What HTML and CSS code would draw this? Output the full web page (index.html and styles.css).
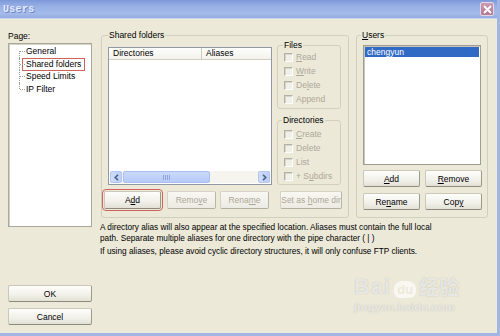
FILE: index.html
```html
<!DOCTYPE html>
<html lang="en">
<head>
    <meta charset="UTF-8">
    <title>Users</title>
    <link rel="stylesheet" href="styles.css">
</head>
<body>
    <div class="window">
        <div class="titlebar">
            <span class="title">Users</span>
            <span class="close">
                <svg width="9" height="9" viewBox="0 0 9 9"><path d="M1.5 1.5L7.5 7.5M7.5 1.5L1.5 7.5" stroke="#fff" stroke-width="1.8" stroke-linecap="round"/></svg>
            </span>
        </div>

        <div class="content">
            <!-- page list + dialog buttons -->
            <div class="side">
                <div class="caption">Page:</div>
                <ul class="tree">
                    <li>General</li>
                    <li><span class="marked">Shared folders</span></li>
                    <li>Speed Limits</li>
                    <li>IP Filter</li>
                </ul>
                <div class="dialog-buttons">
                    <button class="btn">OK</button>
                    <button class="btn">Cancel</button>
                </div>
            </div>

            <div class="main">
                <div class="groups">
                    <fieldset class="group shared">
                        <legend>Shared folders</legend>
                        <div class="shared-row">
                            <div class="listview">
                                <div class="lv-head">
                                    <span class="col-dir">Directories</span>
                                    <span class="col-alias">Aliases</span>
                                </div>
                                <div class="lv-body"></div>
                                <div class="hscroll">
                                    <span class="sb-arrow">
                                        <svg width="5" height="7" viewBox="0 0 5 7"><path d="M4 0.8L1.2 3.5L4 6.2" fill="none" stroke="#4d6185" stroke-width="1.6"/></svg>
                                    </span>
                                    <span class="sb-track">
                                        <span class="sb-thumb"><span class="grip"></span></span>
                                    </span>
                                    <span class="sb-arrow">
                                        <svg width="5" height="7" viewBox="0 0 5 7"><path d="M1 0.8L3.8 3.5L1 6.2" fill="none" stroke="#4d6185" stroke-width="1.6"/></svg>
                                    </span>
                                </div>
                            </div>

                            <div class="perms">
                                <fieldset class="group sub files">
                                    <legend>Files</legend>
                                    <label class="check"><span class="box"></span><span><u>R</u>ead</span></label>
                                    <label class="check"><span class="box"></span><span><u>W</u>rite</span></label>
                                    <label class="check"><span class="box"></span><span>De<u>l</u>ete</span></label>
                                    <label class="check"><span class="box"></span><span>Append</span></label>
                                </fieldset>
                                <fieldset class="group sub dirs">
                                    <legend>Directories</legend>
                                    <label class="check"><span class="box"></span><span><u>C</u>reate</span></label>
                                    <label class="check"><span class="box"></span><span>Delete</span></label>
                                    <label class="check"><span class="box"></span><span>List</span></label>
                                    <label class="check"><span class="box"></span><span>+ S<u>u</u>bdirs</span></label>
                                </fieldset>
                            </div>
                        </div>

                        <div class="shared-buttons">
                            <button class="btn add marked-btn">A<u>d</u>d</button>
                            <button class="btn remove" disabled>Remo<u>v</u>e</button>
                            <button class="btn rename" disabled>Rena<u>m</u>e</button>
                            <button class="btn home" disabled>Set as <u>h</u>ome dir</button>
                        </div>
                    </fieldset>

                    <fieldset class="group users">
                        <legend><u>U</u>sers</legend>
                        <div class="userlist">
                            <div class="user selected">chengyun</div>
                        </div>
                        <div class="user-buttons">
                            <button class="btn"><u>A</u>dd</button>
                            <button class="btn"><u>R</u>emove</button>
                            <button class="btn">Re<u>n</u>ame</button>
                            <button class="btn">Cop<u>y</u></button>
                        </div>
                    </fieldset>
                </div>

                <p class="note">A directory alias will also appear at the specified location. Aliases must contain the full local path. Separate multiple aliases for one directory with the pipe character ( | )</p>
                <p class="note second">If using aliases, please avoid cyclic directory structures, it will only confuse FTP clients.</p>
            </div>
        </div>

        <div class="watermark">
            <div class="wm-logo">
                <span class="wm-bai">Bai</span>
                <span class="wm-du">du</span>
                <span class="wm-cn">经验</span>
            </div>
            <div class="wm-url">jingyan.baidu.com</div>
        </div>
    </div>
</body>
</html>
```

FILE: styles.css
```css
* {
    margin: 0;
    padding: 0;
    box-sizing: border-box;
}

body {
    font-family: "Liberation Sans", Arial, sans-serif;
    font-size: 8.5px;
    color: #000;
    background-color: #ece9d8;
}

.window {
    position: relative;
    width: 500px;
    height: 336px;
    display: flex;
    flex-direction: column;
    background-color: #ece9d8;
    border-right: 3px solid #a2b5e3;
    border-bottom: 3px solid #a2b5e3;
}

/* title bar */
.titlebar {
    height: 19px;
    display: flex;
    align-items: center;
    justify-content: space-between;
    padding: 0 3px 0 3px;
    background: linear-gradient(#7d99d8 0, #98b0e5 35%, #a4bae9 75%, #93abe2 100%);
    border-bottom: 1px solid #c9d4ee;
}

.title {
    font-family: "Liberation Mono", monospace;
    font-weight: bold;
    font-size: 10px;
    letter-spacing: 0.3px;
    color: #e2eafb;
    text-shadow: 1px 1px 0 #6b86c8;
}

.close {
    width: 14px;
    height: 14px;
    display: flex;
    align-items: center;
    justify-content: center;
    background: linear-gradient(#cc9bb3, #b07894);
    border: 1px solid #e6d6e3;
    border-radius: 2px;
}

/* body */
.content {
    flex: 1;
    display: flex;
    gap: 9px;
    padding: 11px 6px 8px 8px;
}

.side {
    width: 84px;
    display: flex;
    flex-direction: column;
}

.caption {
    margin-top: 1px;
    line-height: 11px;
}

.tree {
    list-style: none;
    margin-top: 1px;
    height: 184px;
    padding: 1px 0 0 10px;
    background-color: #fff;
    border: 1px solid #a9a89b;
    box-shadow: inset 1px 1px 0 #d5d3c6;
}

.tree li {
    position: relative;
    height: 12.5px;
    line-height: 12.5px;
    padding-left: 7px;
}

.tree li::before {
    content: "";
    position: absolute;
    left: 0;
    top: 0;
    height: 100%;
    border-left: 1px dotted #9b9b9b;
}

.tree li:first-child::before {
    top: 50%;
    height: 50%;
}

.tree li:last-child::before {
    height: 50%;
}

.tree li::after {
    content: "";
    position: absolute;
    left: 1px;
    top: 50%;
    width: 5px;
    border-top: 1px dotted #9b9b9b;
}

.marked {
    display: inline-block;
    margin-left: -3px;
    padding: 0 3px 0 3px;
    line-height: 11px;
    outline: 1px solid #d0615d;
    outline-offset: 0;
}

.dialog-buttons {
    margin-top: auto;
    display: flex;
    flex-direction: column;
    gap: 6px;
}

.dialog-buttons .btn {
    height: 17px;
}

/* buttons */
.btn {
    font-family: inherit;
    font-size: 8.5px;
    color: #000;
    height: 18px;
    background: linear-gradient(#fdfdfb, #f1f0ea 60%, #e3e1d5);
    border: 1px solid #cbc8ba;
    border-right-color: #9d9a8c;
    border-bottom-color: #8e8b7e;
    border-radius: 2px;
}

.btn:disabled {
    color: #aca899;
    background: linear-gradient(#f8f7f2, #ecebe3);
    border-color: #d6d3c6 #b9b6a8 #b3b0a2 #d6d3c6;
}

.marked-btn {
    outline: 1px solid #d0615d;
    outline-offset: 1px;
}

/* group boxes */
.group {
    border: 1px solid #d0d0bf;
    border-radius: 3px;
    min-width: 0;
}

.group legend {
    margin-left: 5px;
    padding: 0 1px;
    line-height: 10px;
}

.main {
    flex: 1;
    display: flex;
    flex-direction: column;
}

.groups {
    display: flex;
    gap: 7px;
}

.shared {
    width: 248px;
    padding: 0 6px 8px 1px;
}

.shared-row {
    display: flex;
}

.listview {
    margin: 7px 0 0 5px;
    width: 164px;
    height: 138px;
    display: flex;
    flex-direction: column;
    background-color: #fff;
    border: 1px solid #8f9aa6;
}

.lv-head {
    display: flex;
    height: 12px;
    line-height: 11px;
    background: linear-gradient(#fefefd, #f3f2ec);
    border-bottom: 1px solid #d3cfc0;
}

.lv-head span {
    padding-left: 4px;
}

.col-dir {
    width: 93px;
    border-right: 1px solid #cfcbbd;
}

.col-alias {
    flex: 1;
}

.lv-body {
    flex: 1;
}

.hscroll {
    display: flex;
    height: 12px;
    margin: 0 1px 1px 1px;
    background-color: #f5f4ef;
}

.sb-arrow {
    width: 12px;
    display: flex;
    align-items: center;
    justify-content: center;
    background: linear-gradient(90deg, #cfdcfb, #bccff8);
    border: 1px solid #b3c6f1;
    border-radius: 2px;
}

.sb-track {
    flex: 1;
    display: flex;
}

.sb-thumb {
    width: 87px;
    margin-left: 1px;
    display: flex;
    align-items: center;
    justify-content: center;
    background: linear-gradient(#cad9fc, #b6caf5);
    border: 1px solid #a9bff0;
    border-radius: 2px;
}

.grip {
    width: 7px;
    height: 5px;
    background: repeating-linear-gradient(90deg, #8ea6da 0, #8ea6da 1px, transparent 1px, transparent 2px);
}

.perms {
    margin-left: 5px;
    width: 64px;
    display: flex;
    flex-direction: column;
}

.sub {
    padding: 2px 3px 1px 6px;
}

.sub.files {
    padding-top: 0;
    padding-bottom: 2px;
}

.sub.dirs {
    margin-top: 6px;
}

.sub legend {
    margin-left: -1px;
    color: #000;
}

.sub.dirs legend {
    margin-left: -2px;
}

.check {
    display: flex;
    align-items: center;
    gap: 3px;
    height: 14px;
    color: #aca899;
    white-space: nowrap;
}

.box {
    width: 9px;
    height: 9px;
    background-color: #f0efe8;
    border: 1px solid;
    border-color: #b3b1a3 #fdfdfb #fdfdfb #b3b1a3;
    box-shadow: inset 1px 1px 0 #d8d6ca;
}

.shared-buttons {
    display: flex;
    margin-top: 6px;
    padding-left: 1px;
}

.shared-buttons .add {
    width: 57px;
}

.shared-buttons .remove {
    width: 49px;
    margin-left: 6px;
}

.shared-buttons .rename {
    width: 49px;
    margin-left: 4px;
}

.shared-buttons .home {
    width: 62px;
    margin-left: 11px;
}

.users {
    width: 132px;
    padding: 0 5px 7px 6px;
}

.users legend {
    margin-left: -2px;
}

.userlist {
    margin-top: 5px;
    width: 118px;
    height: 120px;
    padding: 1px;
    background-color: #fff;
    border: 1px solid #9e9d92;
    box-shadow: inset 1px 1px 0 #c9c7bb;
}

.user {
    height: 10px;
    line-height: 10px;
    padding-left: 2px;
}

.user.selected {
    background-color: #316ac5;
    color: #fff;
}

.user-buttons {
    display: grid;
    grid-template-columns: 57px 57px;
    column-gap: 5px;
    row-gap: 6px;
    margin-top: 5px;
}

.user-buttons .btn {
    height: 17px;
}

.note {
    max-width: 336px;
    margin-top: 4px;
    margin-left: -1px;
    font-size: 8.25px;
    line-height: 11px;
}

.note.second {
    max-width: none;
    margin-top: 2px;
}

/* baidu watermark */
.watermark {
    position: absolute;
    left: 354px;
    top: 260px;
    width: 118px;
    color: rgba(255, 255, 255, 0.7);
    text-shadow: 0 0 1px rgba(150, 150, 140, 0.7);
}

.wm-logo {
    display: flex;
    align-items: flex-end;
    height: 38px;
}

.wm-bai {
    font-family: "Liberation Sans", sans-serif;
    font-weight: bold;
    font-size: 22px;
    line-height: 22px;
    letter-spacing: 1px;
}

.wm-du {
    margin-left: 3px;
    padding: 2px 3px 1px;
    font-weight: bold;
    font-size: 13px;
    line-height: 14px;
    color: rgba(236, 233, 216, 0.9);
    background-color: rgba(255, 255, 255, 0.65);
    border-radius: 8px 8px 6px 6px;
    text-shadow: none;
}

.wm-cn {
    margin-left: 3px;
    font-family: "Noto Sans CJK SC", sans-serif;
    font-weight: bold;
    font-size: 20px;
    line-height: 22px;
}

.wm-url {
    margin-top: 3px;
    font-family: "Liberation Sans", sans-serif;
    font-weight: bold;
    font-size: 11.5px;
    line-height: 12px;
}
```
